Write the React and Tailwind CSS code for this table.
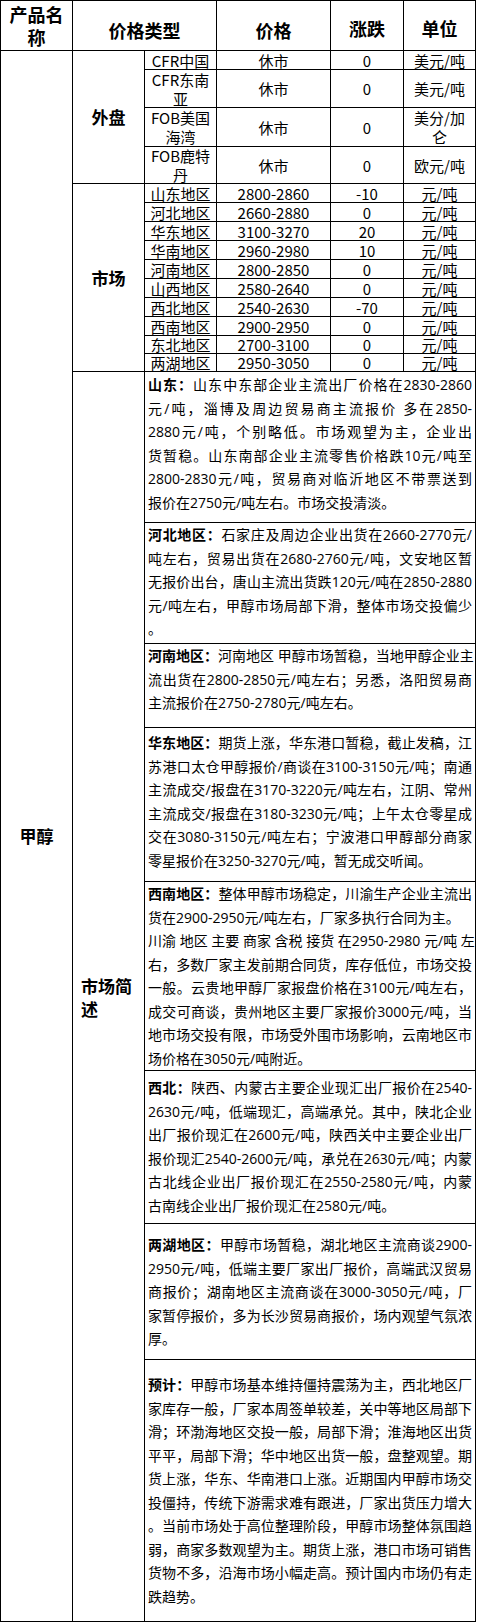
const outer = [
  { name: ['CFR中国'], unit: ['美元/吨'] },
  { name: ['CFR东南', '亚'], unit: ['美元/吨'] },
  { name: ['FOB美国', '海湾'], unit: ['美分/加', '仑'] },
  { name: ['FOB鹿特', '丹'], unit: ['欧元/吨'] },
];

const market = [
  ['山东地区', '2800-2860', '-10'],
  ['河北地区', '2660-2880', '0'],
  ['华东地区', '3100-3270', '20'],
  ['华南地区', '2960-2980', '10'],
  ['河南地区', '2800-2850', '0'],
  ['山西地区', '2580-2640', '0'],
  ['西北地区', '2540-2630', '-70'],
  ['西南地区', '2900-2950', '0'],
  ['东北地区', '2700-3100', '0'],
  ['两湖地区', '2950-3050', '0'],
];

// each line is drawn as in the source; lines listed in `loose` are not stretched
const notes = [
  {
    title: '山东：',
    pt: 'pt-[1px]',
    lines: [
      '山东中东部企业主流出厂价格在2830-2860',
      '元/吨，淄博及周边贸易商主流报价 多在2850-',
      '2880元/吨，个别略低。市场观望为主，企业出',
      '货暂稳。山东南部企业主流零售价格跌10元/吨至',
      '2800-2830元/吨，贸易商对临沂地区不带票送到',
      '报价在2750元/吨左右。市场交投清淡。',
    ],
  },
  {
    title: '河北地区：',
    pt: 'pt-0',
    lines: [
      '石家庄及周边企业出货在2660-2770元/',
      '吨左右，贸易出货在2680-2760元/吨，文安地区暂',
      '无报价出台，唐山主流出货跌120元/吨在2850-2880',
      '元/吨左右，甲醇市场局部下滑，整体市场交投偏少',
      '。',
    ],
  },
  {
    title: '河南地区：',
    pt: 'pt-0',
    lines: [
      '河南地区 甲醇市场暂稳，当地甲醇企业主',
      '流出货在2800-2850元/吨左右；另悉，洛阳贸易商',
      '主流报价在2750-2780元/吨左右。',
    ],
  },
  {
    title: '华东地区：',
    pt: 'pt-[3px]',
    lines: [
      '期货上涨，华东港口暂稳，截止发稿，江',
      '苏港口太仓甲醇报价/商谈在3100-3150元/吨；南通',
      '主流成交/报盘在3170-3220元/吨左右，江阴、常州',
      '主流成交/报盘在3180-3230元/吨；上午太仓零星成',
      '交在3080-3150元/吨左右；宁波港口甲醇部分商家',
      '零星报价在3250-3270元/吨，暂无成交听闻。',
    ],
  },
  {
    title: '西南地区：',
    pt: 'pt-0',
    loose: [1],
    lines: [
      '整体甲醇市场稳定，川渝生产企业主流出',
      '货在2900-2950元/吨左右，厂家多执行合同为主。',
      '川渝 地区 主要 商家 含税 接货 在2950-2980 元/吨 左',
      '右，多数厂家主发前期合同货，库存低位，市场交投',
      '一般。云贵地甲醇厂家报盘价格在3100元/吨左右，',
      '成交可商谈，贵州地区主要厂家报价3000元/吨，当',
      '地市场交投有限，市场受外围市场影响，云南地区市',
      '场价格在3050元/吨附近。',
    ],
  },
  {
    title: '西北：',
    pt: 'pt-[5px]',
    lines: [
      '陕西、内蒙古主要企业现汇出厂报价在2540-',
      '2630元/吨，低端现汇，高端承兑。其中，陕北企业',
      '出厂报价现汇在2600元/吨，陕西关中主要企业出厂',
      '报价现汇2540-2600元/吨，承兑在2630元/吨；内蒙',
      '古北线企业出厂报价现汇在2550-2580元/吨，内蒙',
      '古南线企业出厂报价现汇在2580元/吨。',
    ],
  },
  {
    title: '两湖地区：',
    pt: 'pt-[9px]',
    lines: [
      '甲醇市场暂稳，湖北地区主流商谈2900-',
      '2950元/吨，低端主要厂家出厂报价，高端武汉贸易',
      '商报价；湖南地区主流商谈在3000-3050元/吨，厂',
      '家暂停报价，多为长沙贸易商报价，场内观望气氛浓',
      '厚。',
    ],
  },
  {
    title: '预计：',
    pt: 'pt-[13px]',
    lines: [
      '甲醇市场基本维持僵持震荡为主，西北地区厂',
      '家库存一般，厂家本周签单较差，关中等地区局部下',
      '滑；环渤海地区交投一般，局部下滑；淮海地区出货',
      '平平，局部下滑；华中地区出货一般，盘整观望。期',
      '货上涨，华东、华南港口上涨。近期国内甲醇市场交',
      '投僵持，传统下游需求难有跟进，厂家出货压力增大',
      '。当前市场处于高位整理阶段，甲醇市场整体氛围趋',
      '弱，商家多数观望为主。期货上涨，港口市场可销售',
      '货物不多，沿海市场小幅走高。预计国内市场仍有走',
      '跌趋势。',
    ],
  },
];

const line = 'border-r border-b border-black';
const head = `${line} flex flex-col items-center justify-center text-[18px] font-bold leading-[23px]`;
const cell = `${line} flex flex-col items-center justify-center text-[15px] leading-[19px]`;
const label = `${line} flex items-center justify-center text-[17px] font-bold`;

function Lines({ items }) {
  return items.map((t, i) => <span key={i}>{t}</span>);
}

export default function App() {
  return (
    <div className="w-[477px] bg-white text-black">
      <div
        className="grid w-[476px] grid-cols-[72px_72px_72px_114px_73px_72px]
                   grid-rows-[50px_19px_38px_39px_37px_19px_19px_19px_19px_19px_19px_19px_19px_18px_18px_151px_121px_84px_154px_189px_153px_136px_262px]
                   border-l border-t border-black font-['Noto_Sans_CJK_SC',sans-serif]"
      >
        {/* Header */}
        <div className={head}>
          <span>产品名</span>
          <span>称</span>
        </div>
        <div className={`${head} col-span-2 pt-[10px]`}>价格类型</div>
        <div className={`${head} pt-[10px]`}>价格</div>
        <div className={`${head} pt-[6px]`}>涨跌</div>
        <div className={`${head} pt-[6px]`}>单位</div>

        <div className={`${label} row-span-22`}>甲醇</div>

        {/* 外盘 */}
        <div className={`${label} row-span-4`}>外盘</div>
        {outer.map((r) => (
          <div key={r.name.join('')} className="contents">
            <div className={cell}><Lines items={r.name} /></div>
            <div className={cell}>休市</div>
            <div className={cell}>0</div>
            <div className={cell}><Lines items={r.unit} /></div>
          </div>
        ))}

        {/* 市场 */}
        <div className={`${label} row-span-10`}>市场</div>
        {market.map(([area, price, change]) => (
          <div key={area} className="contents">
            <div className={cell}>{area}</div>
            <div className={cell}>{price}</div>
            <div className={cell}>{change}</div>
            <div className={cell}>元/吨</div>
          </div>
        ))}

        {/* 市场简述 */}
        <div className={`${line} row-span-8 flex flex-col justify-center pl-[8px] pr-[4px] text-[17px] font-bold leading-[23px]`}>
          市场简述
        </div>
        {notes.map((n) => (
          <div
            key={n.title}
            className={`${line} col-span-4 px-[3px] ${n.pt} text-[14px] leading-[23.5px] font-['Open_Sans','Noto_Sans_CJK_SC',sans-serif]`}
          >
            {n.lines.map((text, j) => {
              const last = j === n.lines.length - 1 || (n.loose || []).includes(j);
              return (
                <div
                  key={j}
                  className={`whitespace-nowrap ${last ? '' : '[text-align-last:justify]'}`}
                >
                  {j === 0 && <b className="font-bold">{n.title}</b>}
                  {text}
                </div>
              );
            })}
          </div>
        ))}
      </div>
    </div>
  );
}
